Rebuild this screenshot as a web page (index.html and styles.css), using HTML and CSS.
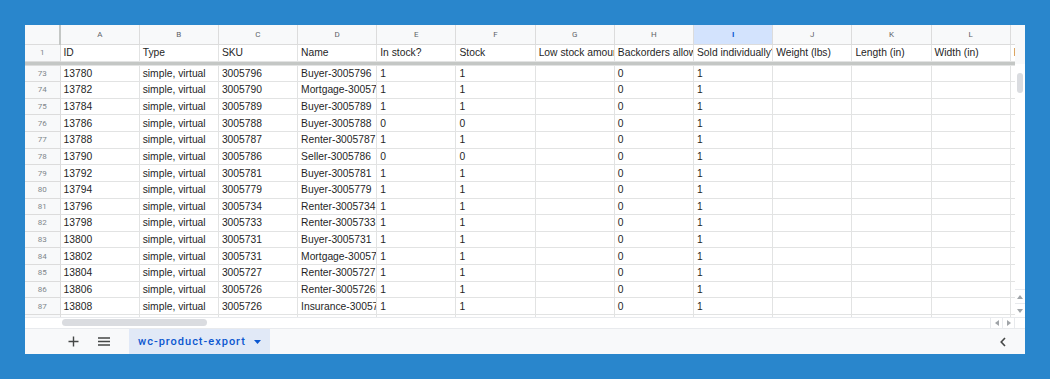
FILE: index.html
```html
<!DOCTYPE html>
<html lang="en">
<head>
<meta charset="UTF-8" />
<title>wc-product-export</title>
<link rel="stylesheet" href="styles.css">
</head>
<body>

<div class="sheet">
  <div class="main">
    <div class="grid-wrap">
      <table class="grid">
        <colgroup>
          <col class="c-rh"><col><col><col><col><col><col><col><col><col><col><col><col><col class="c-m">
        </colgroup>
        <tr class="letters">
          <th class="corner"></th>
          <th>A</th><th>B</th><th>C</th><th>D</th><th>E</th><th>F</th><th>G</th><th>H</th>
          <th class="sel">I</th><th>J</th><th>K</th><th>L</th><th>M</th>
        </tr>
        <tr class="r1">
          <th class="rn">1</th>
          <td>ID</td><td>Type</td><td>SKU</td><td>Name</td><td>In stock?</td><td>Stock</td>
          <td>Low stock amount</td><td>Backorders allowed?</td><td>Sold individually?</td>
          <td>Weight (lbs)</td><td>Length (in)</td><td>Width (in)</td><td>Height (in)</td>
        </tr>
        <tr class="freeze"><td colspan="14"></td></tr>
        <tr><th class="rn">73</th><td>13780</td><td>simple, virtual</td><td>3005796</td><td>Buyer-3005796</td><td>1</td><td>1</td><td></td><td>0</td><td>1</td><td></td><td></td><td></td><td></td></tr>
        <tr><th class="rn">74</th><td>13782</td><td>simple, virtual</td><td>3005790</td><td>Mortgage-3005790</td><td>1</td><td>1</td><td></td><td>0</td><td>1</td><td></td><td></td><td></td><td></td></tr>
        <tr><th class="rn">75</th><td>13784</td><td>simple, virtual</td><td>3005789</td><td>Buyer-3005789</td><td>1</td><td>1</td><td></td><td>0</td><td>1</td><td></td><td></td><td></td><td></td></tr>
        <tr><th class="rn">76</th><td>13786</td><td>simple, virtual</td><td>3005788</td><td>Buyer-3005788</td><td>0</td><td>0</td><td></td><td>0</td><td>1</td><td></td><td></td><td></td><td></td></tr>
        <tr><th class="rn">77</th><td>13788</td><td>simple, virtual</td><td>3005787</td><td>Renter-3005787</td><td>1</td><td>1</td><td></td><td>0</td><td>1</td><td></td><td></td><td></td><td></td></tr>
        <tr><th class="rn">78</th><td>13790</td><td>simple, virtual</td><td>3005786</td><td>Seller-3005786</td><td>0</td><td>0</td><td></td><td>0</td><td>1</td><td></td><td></td><td></td><td></td></tr>
        <tr><th class="rn">79</th><td>13792</td><td>simple, virtual</td><td>3005781</td><td>Buyer-3005781</td><td>1</td><td>1</td><td></td><td>0</td><td>1</td><td></td><td></td><td></td><td></td></tr>
        <tr><th class="rn">80</th><td>13794</td><td>simple, virtual</td><td>3005779</td><td>Buyer-3005779</td><td>1</td><td>1</td><td></td><td>0</td><td>1</td><td></td><td></td><td></td><td></td></tr>
        <tr><th class="rn">81</th><td>13796</td><td>simple, virtual</td><td>3005734</td><td>Renter-3005734</td><td>1</td><td>1</td><td></td><td>0</td><td>1</td><td></td><td></td><td></td><td></td></tr>
        <tr><th class="rn">82</th><td>13798</td><td>simple, virtual</td><td>3005733</td><td>Renter-3005733</td><td>1</td><td>1</td><td></td><td>0</td><td>1</td><td></td><td></td><td></td><td></td></tr>
        <tr><th class="rn">83</th><td>13800</td><td>simple, virtual</td><td>3005731</td><td>Buyer-3005731</td><td>1</td><td>1</td><td></td><td>0</td><td>1</td><td></td><td></td><td></td><td></td></tr>
        <tr><th class="rn">84</th><td>13802</td><td>simple, virtual</td><td>3005731</td><td>Mortgage-3005731</td><td>1</td><td>1</td><td></td><td>0</td><td>1</td><td></td><td></td><td></td><td></td></tr>
        <tr><th class="rn">85</th><td>13804</td><td>simple, virtual</td><td>3005727</td><td>Renter-3005727</td><td>1</td><td>1</td><td></td><td>0</td><td>1</td><td></td><td></td><td></td><td></td></tr>
        <tr><th class="rn">86</th><td>13806</td><td>simple, virtual</td><td>3005726</td><td>Renter-3005726</td><td>1</td><td>1</td><td></td><td>0</td><td>1</td><td></td><td></td><td></td><td></td></tr>
        <tr><th class="rn">87</th><td>13808</td><td>simple, virtual</td><td>3005726</td><td>Insurance-3005726</td><td>1</td><td>1</td><td></td><td>0</td><td>1</td><td></td><td></td><td></td><td></td></tr>
        <tr><th class="rn">88</th><td></td><td></td><td></td><td></td><td></td><td></td><td></td><td></td><td></td><td></td><td></td><td></td><td></td></tr>
      </table>
    </div>
    <div class="vscroll">
      <div class="vs-head"></div>
      <div class="vs-track"><div class="vs-thumb"></div></div>
      <div class="vs-btn"><svg width="6" height="4" viewBox="0 0 6 4"><path d="M0 4 L3 0 L6 4 Z" fill="#a0a4a8"/></svg></div>
      <div class="vs-btn"><svg width="6" height="4" viewBox="0 0 6 4"><path d="M0 0 L3 4 L6 0 Z" fill="#a0a4a8"/></svg></div>
    </div>
  </div>

  <div class="hscroll">
    <div class="hs-lead"></div>
    <div class="hs-track"><div class="hs-thumb"></div></div>
    <div class="hs-btn"><svg width="4" height="6" viewBox="0 0 4 6"><path d="M4 0 L0 3 L4 6 Z" fill="#a0a4a8"/></svg></div>
    <div class="hs-btn"><svg width="4" height="6" viewBox="0 0 4 6"><path d="M0 0 L4 3 L0 6 Z" fill="#a0a4a8"/></svg></div>
    <div class="hs-corner"></div>
  </div>

  <div class="tabbar">
    <span class="tb-icon">
      <svg width="11" height="11" viewBox="0 0 11 11"><path d="M5.5 0.5 V10.5 M0.5 5.5 H10.5" stroke="#444746" stroke-width="1.4"/></svg>
    </span>
    <span class="tb-icon menu">
      <svg width="12" height="9" viewBox="0 0 12 9"><path d="M0 1 H12 M0 4.5 H12 M0 8 H12" stroke="#444746" stroke-width="1.3"/></svg>
    </span>
    <div class="tab">
      <span class="tab-name">wc-product-export</span>
      <svg width="7" height="4" viewBox="0 0 7 4"><path d="M0 0 L3.5 4 L7 0 Z" fill="#0b57d0"/></svg>
    </div>
    <span class="tb-collapse">
      <svg width="6" height="10" viewBox="0 0 6 10"><path d="M5 1 L1.2 5 L5 9" stroke="#444746" stroke-width="1.6" fill="none"/></svg>
    </span>
  </div>
</div>

</body>
</html>
```

FILE: styles.css
```css
body {
  margin: 0;
  padding: 25px;
  background-color: #2986cc;
}
.sheet {
  width: 1000px;
  height: 329px;
  background-color: #fff;
  display: flex;
  flex-direction: column;
  overflow: hidden;
}
.main {
  display: flex;
  height: 292px;
  flex: none;
}
.grid-wrap {
  width: 990px;
  overflow: hidden;
}

/* grid */
.grid {
  table-layout: fixed;
  border-collapse: collapse;
  width: 1005px;
  font-family: "Liberation Sans", Arial, sans-serif;
  font-size: 10.3px;
  color: #1f1f1f;
}
.grid col { width: 79.2px; }
.grid col.c-rh { width: 35px; }
.grid col.c-m { width: 20px; }
.grid td, .grid th {
  border: 1px solid #e2e3e3;
  padding: 0 0 0 3px;
  white-space: nowrap;
  overflow: hidden;
  text-align: left;
  font-weight: normal;
}
.grid tr { height: 16.63px; }
.letters { height: 19px !important; }
.letters th {
  background-color: #f8f9fa;
  color: #5f6368;
  font-family: Roboto, sans-serif;
  font-size: 8px;
  text-align: center;
  padding: 0;
  border-color: #dcdcdc;
  border-top: none;
}
.letters th.corner {
  border-left: none;
  border-right: 2px solid #c4c7c5;
}
.letters th.sel {
  background-color: #d3e3fd;
  color: #0b57d0;
  font-weight: bold;
}
.r1 { height: 17px !important; }
.freeze { height: 3px !important; }
.freeze td {
  background-color: #c4c7c5;
  border: none;
  padding: 0;
  height: 3px;
}
.grid th.rn {
  background-color: #f8f9fa;
  color: #80868b;
  font-family: Roboto, sans-serif;
  font-size: 8px;
  text-align: center;
  padding: 0;
  border-left: none;
  border-color: #dcdcdc;
}

/* scrollbars */
.vscroll {
  width: 10px;
  display: flex;
  flex-direction: column;
  background-color: #fff;
}
.vs-head {
  height: 39px;
  background-color: #f8f9fa;
}
.vs-track {
  flex: 1;
  padding: 9px 2px 0;
}
.vs-thumb {
  height: 20px;
  border-radius: 3px;
  background-color: #dadce0;
}
.vs-btn {
  height: 13px;
  display: flex;
  align-items: center;
  justify-content: center;
  border-top: 1px solid #e8eaed;
}
.hscroll {
  height: 10px;
  display: flex;
  flex: none;
  background-color: #fff;
  border-top: 1px solid #e8eaed;
}
.hs-lead { width: 37px; }
.hs-track {
  flex: 1;
  padding: 1px 0;
}
.hs-thumb {
  width: 145px;
  height: 7px;
  border-radius: 4px;
  background-color: #dadce0;
}
.hs-btn {
  width: 11px;
  display: flex;
  align-items: center;
  justify-content: center;
  border-left: 1px solid #e8eaed;
}
.hs-corner {
  width: 10px;
  border-left: 1px solid #e8eaed;
}

/* sheet tabs */
.tabbar {
  flex: 1;
  display: flex;
  align-items: stretch;
  background-color: #f8f9fa;
  border-top: 1px solid #e8eaed;
  padding-left: 41px;
  font-family: Roboto, sans-serif;
}
.tb-icon {
  width: 14px;
  display: flex;
  align-items: center;
  justify-content: center;
  margin-right: 17px;
}
.tb-icon.menu { margin-right: 18px; }
.tab {
  width: 141px;
  box-sizing: border-box;
  padding: 0 9px;
  display: flex;
  align-items: center;
  justify-content: space-between;
  background-color: #e1e9f7;
}
.tab-name {
  color: #0b57d0;
  font-size: 11px;
  font-weight: 500;
  letter-spacing: 1px;
}
.tb-collapse {
  margin-left: auto;
  margin-right: 19px;
  display: flex;
  align-items: center;
}
```
